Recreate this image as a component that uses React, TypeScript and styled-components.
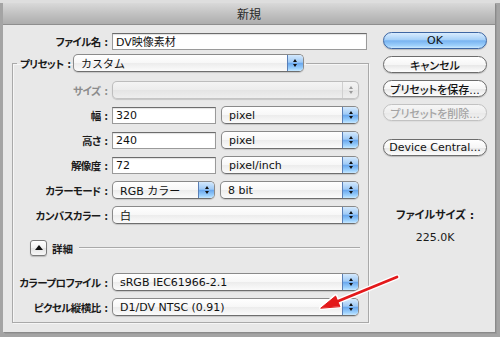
import React from "react";
import styled, { createGlobalStyle, css } from "styled-components";

const GlobalStyle = createGlobalStyle`
  html, body { margin: 0; padding: 0; }
  body {
    width: 500px; height: 337px; overflow: hidden;
    font-family: "DejaVu Sans", "Noto Sans CJK JP", sans-serif;
    -webkit-font-smoothing: antialiased;
  }
  * { box-sizing: border-box; }
`;

const Screen = styled.div`
  position: relative;
  width: 500px;
  height: 337px;
  padding: 3px 5px 5px 3px;
  background: linear-gradient(#dedede 0 3px, #a4a4a4 3px);
`;

const Window = styled.div`
  width: 492px;
  height: 329px;
  display: flex;
  flex-direction: column;
  background: #e8e8e8;
  box-shadow: 1px 1px 0 #8a8a8a, 2px 2px 0 #9a9a9a;
`;

const TitleBar = styled.div`
  height: 22px;
  display: flex;
  align-items: center;
  justify-content: center;
  background: linear-gradient(#d9d9d9, #c2c2c2 50%, #adadad);
  border-bottom: 1px solid #8e8e8e;
  font-family: "Noto Sans CJK JP", sans-serif;
  font-size: 12px;
  color: #2a2a2a;
`;

const Body = styled.div`
  display: flex;
  gap: 14px;
  padding: 6px 8px 0 9px;
`;

const LeftCol = styled.div`
  width: 357px;
  display: flex;
  flex-direction: column;
`;

const RightCol = styled.div`
  width: 104px;
  display: flex;
  flex-direction: column;
  align-items: stretch;
`;

const Row = styled.div<{ $mt?: number }>`
  display: flex;
  align-items: center;
  height: 18px;
  gap: 5px;
  margin-top: ${(p) => p.$mt ?? 0}px;
`;

const LabelBox = styled.span<{ $w?: number; $dim?: boolean }>`
  width: ${(p) => (p.$w ? `${p.$w}px` : "auto")};
  flex: none;
  display: flex;
  justify-content: flex-end;
  gap: 4px;
  white-space: nowrap;
  font-family: "Noto Sans CJK JP", sans-serif;
  font-feature-settings: "palt";
  font-size: 10.5px;
  font-weight: 700;
  color: ${(p) => (p.$dim ? "#8c8c8c" : "#1a1a1a")};
  margin-right: -1px;
`;

const LabelText = styled.span`
  letter-spacing: -0.6px;
`;

const Label = ({ w, dim, children }: { w?: number; dim?: boolean; children: React.ReactNode }) => (
  <LabelBox $w={w} $dim={dim}>
    <LabelText>{children}</LabelText>
    <span>:</span>
  </LabelBox>
);

const valueFont = css`
  font-family: "DejaVu Sans", "Noto Sans CJK JP", sans-serif;
  font-size: 11px;
  color: #111;
  white-space: nowrap;
`;

const TextField = styled.div<{ $w: number }>`
  ${valueFont};
  width: ${(p) => p.$w}px;
  height: 17px;
  flex: none;
  display: flex;
  align-items: center;
  padding-left: 3px;
  background: #fff;
  border: 1px solid #9a9a9a;
  border-top-color: #6c6c6c;
  box-shadow: inset 0 1px 1px rgba(0, 0, 0, 0.12);
`;

const PopupBox = styled.div<{ $w: number; $disabled?: boolean }>`
  ${valueFont};
  width: ${(p) => p.$w}px;
  height: 18px;
  flex: none;
  display: flex;
  align-items: stretch;
  border: 1px solid ${(p) => (p.$disabled ? "#bdbdbd" : "#8a8a8a")};
  border-bottom-color: ${(p) => (p.$disabled ? "#c4c4c4" : "#6e6e6e")};
  border-radius: 5px;
  overflow: hidden;
  background: ${(p) =>
    p.$disabled
      ? "linear-gradient(#f4f4f4, #ececec 50%, #e4e4e4 50%, #eeeeee)"
      : "linear-gradient(#ffffff, #f7f7f7 50%, #ececec 51%, #fbfbfb)"};
  box-shadow: 0 1px 1px rgba(0, 0, 0, 0.15);
`;

const PopupText = styled.span`
  flex: 1;
  display: flex;
  align-items: center;
  padding-left: 7px;
  overflow: hidden;
`;

const Stepper = styled.span<{ $disabled?: boolean }>`
  width: 16px;
  flex: none;
  display: flex;
  flex-direction: column;
  align-items: center;
  justify-content: center;
  gap: 2px;
  border-left: 1px solid ${(p) => (p.$disabled ? "#d0d0d0" : "#5a7fb6")};
  background: ${(p) =>
    p.$disabled
      ? "transparent"
      : "linear-gradient(#d4e9fd, #9fcaf6 45%, #6aa8ee 52%, #9ed2fd 85%, #c8e8ff)"};
`;

const Tri = styled.span<{ $down?: boolean; $disabled?: boolean }>`
  width: 0;
  height: 0;
  border-left: 2.5px solid transparent;
  border-right: 2.5px solid transparent;
  ${(p) =>
    p.$down
      ? `border-top: 3px solid ${p.$disabled ? "#9a9a9a" : "#111"};`
      : `border-bottom: 3px solid ${p.$disabled ? "#9a9a9a" : "#111"};`}
`;

const Popup = ({ w, text, disabled }: { w: number; text?: string; disabled?: boolean }) => (
  <PopupBox $w={w} $disabled={disabled}>
    <PopupText>{text}</PopupText>
    <Stepper $disabled={disabled}>
      <Tri $disabled={disabled} />
      <Tri $down $disabled={disabled} />
    </Stepper>
  </PopupBox>
);

const Group = styled.fieldset`
  margin: 4px 0 0 0;
  padding: 9px 8px 6px 0;
  min-inline-size: 0;
  border: 1px solid #a9a9a9;
  box-shadow: inset 1px 1px 0 #f6f6f6, 1px 1px 0 #f6f6f6;
  display: flex;
  flex-direction: column;
`;

const Legend = styled.legend`
  margin-left: 4px;
  padding: 0 2px 0 3px;
  display: flex;
  align-items: center;
  gap: 3px;
  height: 18px;
`;

const DetailRow = styled.div`
  display: flex;
  align-items: center;
  height: 16px;
  margin-top: 16px;
  padding-left: 17px;
  gap: 5px;
`;

const Disclosure = styled.span`
  width: 17px;
  height: 16px;
  flex: none;
  display: flex;
  align-items: center;
  justify-content: center;
  border: 1px solid #7a7a7a;
  border-radius: 3px;
  background: linear-gradient(#ffffff, #f0f0f0 50%, #e2e2e2 51%, #f8f8f8);
  box-shadow: 0 1px 1px rgba(0, 0, 0, 0.2);
`;

const UpTri = styled.span`
  width: 0;
  height: 0;
  border-left: 4px solid transparent;
  border-right: 4px solid transparent;
  border-bottom: 5px solid #111;
  margin-top: -1px;
`;

const DetailText = styled.span`
  font-family: "Noto Sans CJK JP", sans-serif;
  font-size: 10.5px;
  font-weight: 700;
  color: #1a1a1a;
`;

const Rule = styled.span`
  flex: 1;
  height: 2px;
  margin: 0 0 0 1px;
  border-top: 1px solid #a9a9a9;
  border-bottom: 1px solid #f8f8f8;
`;

const Button = styled.div<{ $default?: boolean; $disabled?: boolean; $mt: number }>`
  height: 17px;
  margin-top: ${(p) => p.$mt}px;
  display: flex;
  align-items: center;
  justify-content: center;
  border-radius: 9px;
  font-family: "DejaVu Sans", "Noto Sans CJK JP", sans-serif;
  font-feature-settings: "palt";
  font-size: 11px;
  font-weight: 500;
  white-space: nowrap;
  color: ${(p) => (p.$disabled ? "#a4a4a4" : "#111")};
  border: 1px solid
    ${(p) => (p.$disabled ? "#c2c2c2" : p.$default ? "#3d66a3" : "#6c6c6c")};
  background: ${(p) =>
    p.$default
      ? "linear-gradient(#d9ecfe, #a6d0f8 45%, #78b3f0 52%, #9fd1fc 85%, #cdeaff)"
      : p.$disabled
      ? "linear-gradient(#f6f6f6, #eeeeee 50%, #e8e8e8 51%, #f2f2f2)"
      : "linear-gradient(#ffffff, #f6f6f6 50%, #e6e6e6 51%, #fdfdfd)"};
  box-shadow: 0 1px 1px rgba(0, 0, 0, ${(p) => (p.$disabled ? 0.05 : 0.2)});
`;

const SizeLabel = styled.div<{ $mt: number; $bold?: boolean }>`
  margin-top: ${(p) => p.$mt}px;
  text-align: center;
  line-height: 14px;
  font-family: "DejaVu Sans", "Noto Sans CJK JP", sans-serif;
  font-feature-settings: "palt";
  font-size: 11px;
  font-weight: ${(p) => (p.$bold ? 700 : 400)};
  color: #1a1a1a;
`;

const ArrowOverlay = styled.svg`
  position: absolute;
  left: 0;
  top: 0;
  width: 500px;
  height: 337px;
  pointer-events: none;
`;

export default function App() {
  return (
    <>
      <GlobalStyle />
      <Screen>
        <Window>
          <TitleBar>新規</TitleBar>
          <Body>
            <LeftCol>
              <Row $mt={1}>
                <Label w={96}>ファイル名</Label>
                <TextField $w={255}>DV映像素材</TextField>
              </Row>
              <Group>
                <Legend>
                  <Label>プリセット</Label>
                  <Popup w={231} text="カスタム" />
                </Legend>
                <Row>
                  <Label w={95} dim>サイズ</Label>
                  <Popup w={247} disabled />
                </Row>
                <Row $mt={7}>
                  <Label w={95}>幅</Label>
                  <TextField $w={104}>320</TextField>
                  <Popup w={138} text="pixel" />
                </Row>
                <Row $mt={7}>
                  <Label w={95}>高さ</Label>
                  <TextField $w={104}>240</TextField>
                  <Popup w={138} text="pixel" />
                </Row>
                <Row $mt={7}>
                  <Label w={95}>解像度</Label>
                  <TextField $w={104}>72</TextField>
                  <Popup w={138} text="pixel/inch" />
                </Row>
                <Row $mt={7}>
                  <Label w={95}>カラーモード</Label>
                  <Popup w={103} text="RGB カラー" />
                  <Popup w={139} text="8 bit" />
                </Row>
                <Row $mt={7}>
                  <Label w={95}>カンバスカラー</Label>
                  <Popup w={247} text="白" />
                </Row>
                <DetailRow>
                  <Disclosure>
                    <UpTri />
                  </Disclosure>
                  <DetailText>詳細</DetailText>
                  <Rule />
                </DetailRow>
                <Row $mt={17}>
                  <Label w={95}>カラープロファイル</Label>
                  <Popup w={247} text="sRGB IEC61966-2.1" />
                </Row>
                <Row $mt={7}>
                  <Label w={95}>ピクセル縦横比</Label>
                  <Popup w={247} text="D1/DV NTSC (0.91)" />
                </Row>
              </Group>
            </LeftCol>
            <RightCol>
              <Button $default $mt={1}>OK</Button>
              <Button $mt={7}>キャンセル</Button>
              <Button $mt={7}>プリセットを保存...</Button>
              <Button $disabled $mt={7}>プリセットを削除...</Button>
              <Button $mt={18}>Device Central...</Button>
              <SizeLabel $mt={53} $bold>ファイルサイズ :</SizeLabel>
              <SizeLabel $mt={8}>225.0K</SizeLabel>
            </RightCol>
          </Body>
        </Window>
        <ArrowOverlay viewBox="0 0 500 337">
          <g strokeLinecap="round" strokeLinejoin="round">
            <line x1="397" y1="277" x2="336" y2="302" stroke="#fff" strokeWidth="5.5" />
            <polygon points="321,308 335.6,296.1 339.8,306.3" fill="#fff" stroke="#fff" strokeWidth="4" />
            <line x1="397" y1="277" x2="336" y2="302" stroke="#e3191b" strokeWidth="2.8" />
            <polygon points="321,308 335.6,296.1 339.8,306.3" fill="#e3191b" stroke="#e3191b" strokeWidth="1" />
          </g>
        </ArrowOverlay>
      </Screen>
    </>
  );
}
